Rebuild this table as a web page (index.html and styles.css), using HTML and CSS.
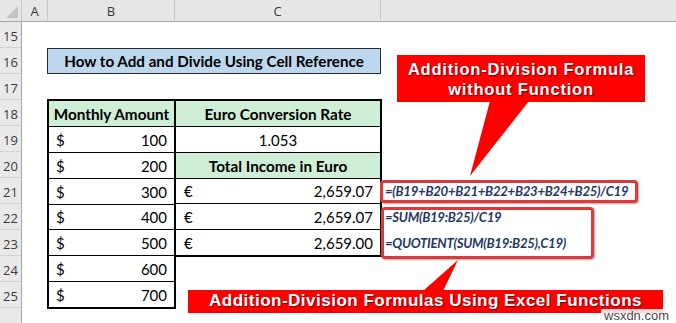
FILE: index.html
```html
<!DOCTYPE html>
<html>
<head>
<meta charset="utf-8">
<link rel="stylesheet" href="styles.css">
</head>
<body>
<div class="sheet">
  <div class="corner"><svg class="tri" width="14" height="14" viewBox="0 0 14 14"><polygon points="13,1 13,13 1,13" fill="#c3c3c3"/></svg></div>
  <div class="colhead">A</div>
  <div class="colhead">B</div>
  <div class="colhead">C</div>
  <div class="colhead last"></div>

  <div class="rowheads">
    <div class="rh">15</div><div class="rh">16</div><div class="rh">17</div><div class="rh">18</div>
    <div class="rh">19</div><div class="rh">20</div><div class="rh">21</div><div class="rh">22</div>
    <div class="rh">23</div><div class="rh">24</div><div class="rh">25</div><div class="rh"></div>
  </div>

  <div class="title">How to Add and Divide Using Cell Reference</div>

  <div class="tblB">
    <div class="cell hdr">Monthly Amount</div>
    <div class="cell amt"><span>$</span><span>100</span></div>
    <div class="cell amt"><span>$</span><span>200</span></div>
    <div class="cell amt"><span>$</span><span>300</span></div>
    <div class="cell amt"><span>$</span><span>400</span></div>
    <div class="cell amt"><span>$</span><span>500</span></div>
    <div class="cell amt"><span>$</span><span>600</span></div>
    <div class="cell amt"><span>$</span><span>700</span></div>
  </div>

  <div class="tblC">
    <div class="cell hdr">Euro Conversion Rate</div>
    <div class="cell mid">1.053</div>
    <div class="cell hdr">Total Income in Euro</div>
    <div class="cell eur"><span>€</span><span>2,659.07</span></div>
    <div class="cell eur"><span>€</span><span>2,659.07</span></div>
    <div class="cell eur"><span>€</span><span>2,659.00</span></div>
  </div>

  <div class="f r21">=(B19+B20+B21+B22+B23+B24+B25)/C19</div>
  <div class="f r22">=SUM(B19:B25)/C19</div>
  <div class="f r23">=QUOTIENT(SUM(B19:B25),C19)</div>

  <div class="mark mark1"></div>
  <div class="mark mark2"></div>

  <div class="callout ct">
    <svg class="ptr ptr-top" width="80" height="80" viewBox="0 0 80 80"><polygon points="30,0 69,0 10,75" fill="#f00"/></svg>
    <span class="ctext">Addition-Division Formula<br>without Function</span>
  </div>

  <div class="callout cb">
    <svg class="ptr ptr-bot" width="50" height="32" viewBox="0 0 50 32"><polygon points="5,32 25,32 40,1" fill="#f00"/></svg>
    <span class="ctext">Addition-Division Formulas Using Excel Functions</span>
  </div>

  <div class="wm">wsxdn.com</div>
</div>
</body>
</html>
```

FILE: styles.css
```css
* { box-sizing: border-box; margin: 0; padding: 0; }
html, body { width: 676px; height: 323px; overflow: hidden; background: #fff; }
body { font-family: Lato, "Open Sans", sans-serif; color: #000; }

.sheet {
  position: relative;
  display: grid;
  grid-template-columns: 22px 26px 127px 206px 1fr;
  grid-template-rows: 22px repeat(11, 26px) 1fr;
  height: 323px;
}

.corner {
  grid-column: 1; grid-row: 1;
  background: #e6e6e6;
  border-right: 1px solid #c8c8c8;
  border-bottom: 1px solid #a6a6a6;
  display: flex; align-items: flex-end; justify-content: flex-end;
  padding: 0 2px 2px 0;
}
.tri { display: block; }

.colhead {
  grid-row: 1;
  background: #e6e6e6;
  border-right: 1px solid #c8c8c8;
  border-bottom: 1px solid #a6a6a6;
  display: flex; align-items: center; justify-content: center;
  font-family: "Open Sans", sans-serif;
  font-size: 13px;
  color: #3a3a3a;
}
.colhead.last { border-right: 0; }

.rowheads {
  grid-column: 1; grid-row: 2 / -1;
  display: flex; flex-direction: column;
  background: #e9e9e9;
  border-right: 1px solid #a6a6a6;
}
.rh {
  height: 26px; flex: none;
  border-bottom: 1px solid #d2d2d2;
  display: flex; align-items: center; justify-content: center;
  font-family: "Open Sans", sans-serif;
  font-size: 13px;
  color: #3a3a3a;
  padding-top: 2px;
}

.title {
  grid-column: 3 / span 2; grid-row: 3;
  margin-left: -1px;
  background: #bdd7ee;
  border: 1px solid #2a2a2a;
  display: flex; align-items: center; justify-content: center;
  font-weight: bold;
  font-size: 15.2px;
}

.tblB, .tblC {
  display: grid;
  gap: 1px;
  background: #000;
  border: 2px solid #000;
}
.tblB {
  grid-column: 3; grid-row: 5 / span 8;
  margin: -1px;
  grid-template-rows: repeat(8, 1fr);
}
.tblC {
  grid-column: 4; grid-row: 5 / span 6;
  margin: -1px -1px -1px 1px;
  border-left: 0;
  grid-template-rows: repeat(6, 1fr);
}

.cell {
  background: #fff;
  display: flex; align-items: center;
  font-size: 15px;
  padding-top: 1px;
}
.hdr { background: #cfeed6; font-weight: bold; justify-content: center; font-size: 15.3px; }
.mid { justify-content: center; }
.amt { justify-content: space-between; padding-left: 7px; padding-right: 7px; }
.eur { justify-content: space-between; padding-left: 8px; padding-right: 7px; }

.f {
  grid-column: 5;
  display: flex; align-items: center;
  padding-left: 4px;
  font-style: italic; font-weight: bold;
  font-size: 13.2px;
  letter-spacing: -0.3px;
  color: #1f3864;
}
.r21 { grid-row: 8; }
.r22 { grid-row: 9; }
.r23 { grid-row: 10; }

.mark {
  position: absolute;
  border: 3px solid #db3a3d;
  border-radius: 4px;
  box-shadow: 1px 1px 2px rgba(0,0,0,0.35);
}
.mark1 { left: 380px; top: 180px; width: 258px; height: 23px; }
.mark2 { left: 381px; top: 207px; width: 213px; height: 52px; }

.callout {
  position: absolute;
  background: #f00;
  color: #fff;
  font-family: "Liberation Sans", Arial, sans-serif;
  font-weight: bold;
  text-align: center;
  text-shadow: 1px 1px 1px rgba(60,0,0,0.75);
  display: flex; align-items: center; justify-content: center;
}
.ctext { position: relative; }
.ct {
  left: 397px; top: 55px; width: 248px; height: 47px;
  font-size: 16.5px; line-height: 20px; letter-spacing: 0.8px;
}
.cb {
  left: 188px; top: 290px; width: 475px; height: 23px;
  font-size: 17px; line-height: 17px; letter-spacing: 0.5px;
  padding-bottom: 3px;
}
.ptr { position: absolute; display: block; }
.ptr-top { left: 63px; top: 46px; }
.ptr-bot { left: 230px; top: -31px; }

.wm {
  position: absolute;
  left: 601px; top: 309px;
  padding: 0 3px;
  background: rgba(255,255,255,0.85);
  font-family: "Liberation Sans", Arial, sans-serif;
  font-size: 13px;
  line-height: 13px;
  color: #4a4a4a;
}
```
